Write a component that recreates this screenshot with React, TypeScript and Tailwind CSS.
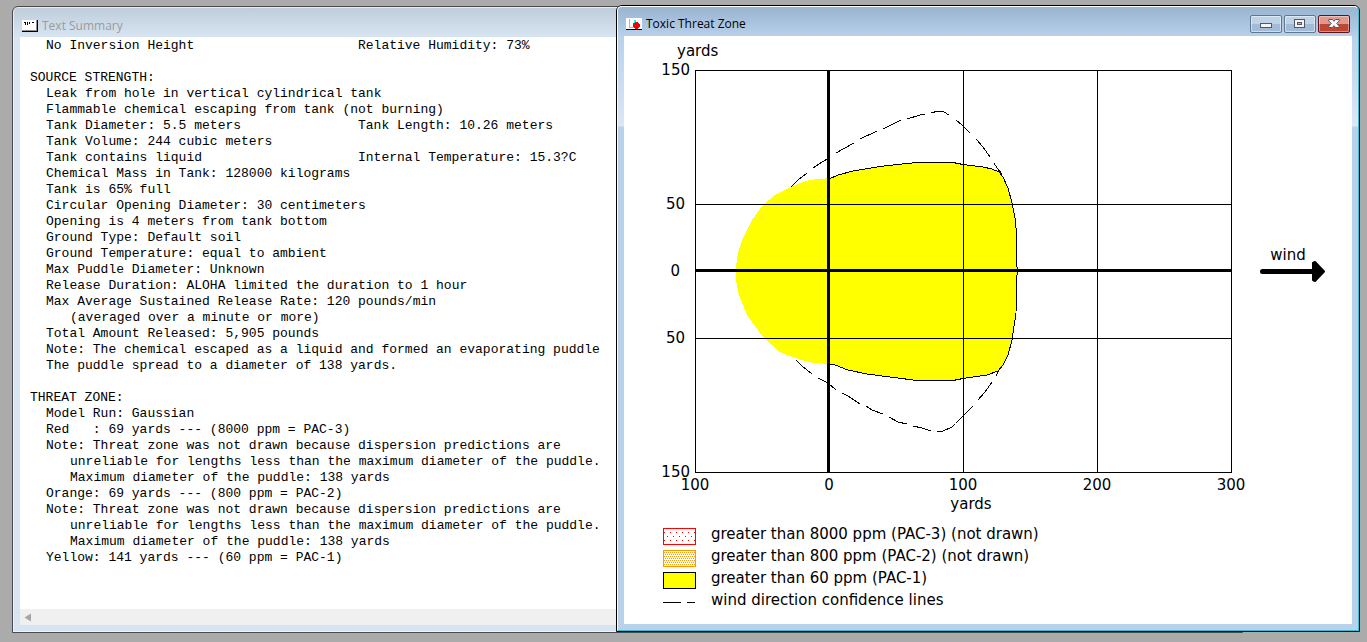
import { clsx } from 'clsx';

interface SummaryLine {
  text: string;
  // Second column, for lines that pair two readings.
  extra?: string;
  indent?: 1 | 2;
}

const INVERSION: SummaryLine[] = [
  { text: 'No Inversion Height', extra: 'Relative Humidity: 73%', indent: 1 },
];

const SOURCE_STRENGTH: SummaryLine[] = [
  { text: 'SOURCE STRENGTH:' },
  { text: 'Leak from hole in vertical cylindrical tank', indent: 1 },
  { text: 'Flammable chemical escaping from tank (not burning)', indent: 1 },
  { text: 'Tank Diameter: 5.5 meters', extra: 'Tank Length: 10.26 meters', indent: 1 },
  { text: 'Tank Volume: 244 cubic meters', indent: 1 },
  { text: 'Tank contains liquid', extra: 'Internal Temperature: 15.3?C', indent: 1 },
  { text: 'Chemical Mass in Tank: 128000 kilograms', indent: 1 },
  { text: 'Tank is 65% full', indent: 1 },
  { text: 'Circular Opening Diameter: 30 centimeters', indent: 1 },
  { text: 'Opening is 4 meters from tank bottom', indent: 1 },
  { text: 'Ground Type: Default soil', indent: 1 },
  { text: 'Ground Temperature: equal to ambient', indent: 1 },
  { text: 'Max Puddle Diameter: Unknown', indent: 1 },
  { text: 'Release Duration: ALOHA limited the duration to 1 hour', indent: 1 },
  { text: 'Max Average Sustained Release Rate: 120 pounds/min', indent: 1 },
  { text: '(averaged over a minute or more)', indent: 2 },
  { text: 'Total Amount Released: 5,905 pounds', indent: 1 },
  { text: 'Note: The chemical escaped as a liquid and formed an evaporating puddle', indent: 1 },
  { text: 'The puddle spread to a diameter of 138 yards.', indent: 1 },
];

const THREAT_ZONE: SummaryLine[] = [
  { text: 'THREAT ZONE:' },
  { text: 'Model Run: Gaussian', indent: 1 },
  { text: 'Red   : 69 yards --- (8000 ppm = PAC-3)', indent: 1 },
  { text: 'Note: Threat zone was not drawn because dispersion predictions are', indent: 1 },
  { text: 'unreliable for lengths less than the maximum diameter of the puddle.', indent: 2 },
  { text: 'Maximum diameter of the puddle: 138 yards', indent: 2 },
  { text: 'Orange: 69 yards --- (800 ppm = PAC-2)', indent: 1 },
  { text: 'Note: Threat zone was not drawn because dispersion predictions are', indent: 1 },
  { text: 'unreliable for lengths less than the maximum diameter of the puddle.', indent: 2 },
  { text: 'Maximum diameter of the puddle: 138 yards', indent: 2 },
  { text: 'Yellow: 141 yards --- (60 ppm = PAC-1)', indent: 1 },
];

// Wind direction confidence lines, one entry per dash.
const CONFIDENCE_DASHES = [
  '167,151 174,144 183,137',
  '189,132 195,128 203,123',
  '212,117 230,107',
  '236,103 253,95',
  '259,93 277,84',
  '283,83 296,79 301,78',
  '307,77 314,75 320,76 325,79',
  '332,84 338,89 346,97',
  '352,103 359,111 366,121',
  '370,127 373,132 378,138',
  '172,324 178,330 188,338',
  '194,342 204,347 212,354',
  '218,357 224,360 236,368',
  '242,370 248,374 259,378',
  '265,381 274,386 283,388',
  '289,390 298,392 307,395',
  '313,396 319,395 328,391 331,388',
  '332,387 341,378 349,370',
  '354,364 361,356 368,346',
  '372,340 376,332',
];

const ZONE_OUTLINE =
  'M206 142.5 L214 139 L229 135 L256 130.5 L273 128.5 L293 126.5 L329 126.5 L339 128.5 L359 131 L368 133 L375 136 L379 141 L384 152 L388 167 L391 182 L392.5 197 L392.5 227 L393.5 235 L392.5 244 L392 277 L388 304 L384 319 L379 329 L374 335 L363 339 L339 342.5 L329 344.5 L293 344.5 L243 338 L224 334 L211 329 L206 328';

const ZONE_BACK =
  'L189 327 L171 322 L156 316 L139 301 L123 279 L115 259 L112 244 L112 231 L114 217 L119 202 L128 184 L139 169 L151 159 L167 151 L176 147 L185 144 L206 142 Z';

function SummaryBlock({ lines }: { lines: SummaryLine[] }) {
  return (
    <div>
      {lines.map((line, i) => (
        <p
          key={i}
          className={clsx(
            'flex whitespace-pre',
            line.indent === 1 && 'pl-4',
            line.indent === 2 && 'pl-10'
          )}>
          <span className={line.extra ? 'w-78 shrink-0' : undefined}>{line.text}</span>
          {line.extra && <span>{line.extra}</span>}
        </p>
      ))}
    </div>
  );
}

function SummaryIcon() {
  return (
    <svg width="16" height="12" shapeRendering="crispEdges" aria-hidden>
      <rect width="15" height="11" fill="#fff" />
      <path d="M15 0h1v12H0v-1h15z" fill="#000" />
      <path d="M14 0h1v10h-1zM0 10h15v1H0z" fill="#909090" />
      <path d="M2 2h2v3H3V3H2zM5 2h1v3H5zM7 2h1v2H7zM10 2h2v1h-2z" fill="#000" />
    </svg>
  );
}

function ThreatIcon() {
  return (
    <svg width="16" height="12" shapeRendering="crispEdges" aria-hidden>
      <rect width="16" height="12" fill="#fff" />
      <path d="M3 1h1v9H3zM3 9h5v1H3zM8 2h2v3H8z" fill="#00ffff" />
      <path d="M7 5h1v4H7zM9 9h1v1H9z" fill="#ff00ff" />
      <path d="M9 4h3v1h1v1h1v3h-1v1h-1v1H9v-1H8V9H7V6h1V5h1z" fill="#ff0000" />
      <path d="M0 11h16v1H0z" fill="#000" />
    </svg>
  );
}

function CaptionButtons() {
  const base =
    'flex h-[18px] w-8 items-center justify-center rounded-xs border ring-inset ring-1';
  const plain = clsx(
    base,
    'border-[#5f7891] ring-white/50 bg-linear-to-b from-[#bfd3e8] from-50% to-[#a2bbd6] to-50%'
  );
  return (
    <div className="flex gap-[2px]">
      <button type="button" aria-label="Minimize" className={plain}>
        <svg width="12" height="12" shapeRendering="crispEdges" aria-hidden>
          <rect x="0.5" y="5.5" width="11" height="4" fill="#f4f4f4" stroke="#535666" />
        </svg>
      </button>
      <button type="button" aria-label="Maximize" className={plain}>
        <svg width="12" height="12" shapeRendering="crispEdges" aria-hidden>
          <rect x="0.5" y="1.5" width="10" height="8" fill="#f4f4f4" stroke="#535666" />
          <rect x="3.5" y="4.5" width="4" height="2" fill="#a2bbd6" stroke="#535666" />
        </svg>
      </button>
      <button
        type="button"
        aria-label="Close"
        className={clsx(
          base,
          'border-[#5b1420] ring-white/40 bg-linear-to-b from-[#e09a8d] from-50% to-[#bf4630] to-50%'
        )}>
        <svg width="12" height="12" viewBox="0 0 12 12" aria-hidden>
          <path
            d="M0.8 1.5H4.5L6 3.3L7.5 1.5H11.2V3L8.7 5.5L11.2 8V9.5H7.5L6 7.7L4.5 9.5H0.8V8L3.3 5.5L0.8 3Z"
            fill="#fafafa"
            stroke="#535666"
          />
        </svg>
      </button>
    </div>
  );
}

function ThreatChart() {
  return (
    <svg
      viewBox="0 0 728 484"
      className="block w-full text-[15px]"
      role="img"
      aria-label="Toxic Threat Zone">
      <g shapeRendering="crispEdges" fill="none" stroke="#000">
        <path d={`${ZONE_OUTLINE} ${ZONE_BACK}`} fill="#ffff00" stroke="none" />
        <path d={ZONE_OUTLINE} />
        {CONFIDENCE_DASHES.map(points => (
          <polyline key={points} points={points} />
        ))}
        <rect x="71.5" y="34.5" width="536" height="402" />
        <path d="M339.5 34V436M473.5 34V436M71 168.5H607M71 302.5H607" />
        <path d="M204.5 34V436M71 234.5H607" strokeWidth="3" />
      </g>
      <path d="M638.5 235.5H690" stroke="#000" strokeWidth="5" strokeLinecap="round" />
      <path
        d="M689 227L691 226L700 235.5L691 245L689 244Z"
        stroke="#000"
        strokeWidth="2"
        strokeLinejoin="round"
      />
      <text x="53" y="20">yards</text>
      <g textAnchor="end">
        <text x="66" y="39">150</text>
        <text x="61" y="173">50</text>
        <text x="56" y="240">0</text>
        <text x="61" y="307">50</text>
        <text x="66" y="441">150</text>
      </g>
      <g textAnchor="middle">
        <text x="71" y="454">100</text>
        <text x="205" y="454">0</text>
        <text x="339" y="454">100</text>
        <text x="473" y="454">200</text>
        <text x="607" y="454">300</text>
        <text x="347" y="473">yards</text>
        <text x="664" y="224">wind</text>
      </g>
    </svg>
  );
}

function ChartLegend() {
  return (
    <ul className="mt-[3px] ml-[39px] text-[15px] leading-[22px]">
      <li className="flex items-end gap-[15px]">
        <svg width="33" height="17" shapeRendering="crispEdges" aria-hidden>
          <defs>
            <pattern id="sparse" width="6" height="8" patternUnits="userSpaceOnUse">
              <path d="M1 4h1v1H1zM4 0h1v1H4z" fill="#ff0000" />
            </pattern>
          </defs>
          <rect x="0.5" y="0.5" width="32" height="16" fill="url(#sparse)" stroke="#ff0000" />
        </svg>
        greater than 8000 ppm (PAC-3) (not drawn)
      </li>
      <li className="flex items-end gap-[15px]">
        <svg width="33" height="17" shapeRendering="crispEdges" aria-hidden>
          <defs>
            <pattern id="dense" width="2" height="4" patternUnits="userSpaceOnUse">
              <path d="M0 0h1v1H0zM1 2h1v1H1z" fill="#ff9900" />
            </pattern>
          </defs>
          <rect x="0.5" y="0.5" width="32" height="16" fill="url(#dense)" stroke="#ff9900" />
        </svg>
        greater than 800 ppm (PAC-2) (not drawn)
      </li>
      <li className="flex items-end gap-[15px]">
        <svg width="33" height="17" shapeRendering="crispEdges" aria-hidden>
          <rect x="0.5" y="0.5" width="32" height="16" fill="#ffff00" stroke="#000" />
        </svg>
        greater than 60 ppm (PAC-1)
      </li>
      <li className="flex items-end gap-[15px]">
        <svg width="33" height="17" shapeRendering="crispEdges" aria-hidden>
          <path d="M0 8.5h18M24 8.5h8" stroke="#000" />
        </svg>
        wind direction confidence lines
      </li>
    </ul>
  );
}

function TextSummaryWindow() {
  return (
    <section className="absolute top-[6px] right-[124px] bottom-[9px] left-3 flex flex-col rounded-t-md border border-[#4a4a4a] bg-linear-to-b from-[#bfcddb] to-[#d7e4f2] to-[30px] p-[7px] pt-0 ring-1 ring-white/60 ring-inset">
      <header className="flex h-[30px] items-center gap-1 pt-2 pl-[2px] font-['Open_Sans',sans-serif] text-xs text-[#9b9b9b]">
        <SummaryIcon />
        <h2>Text Summary</h2>
      </header>
      <div className="flex flex-1 flex-col justify-between overflow-hidden bg-white">
        <div className="space-y-4 pt-px pl-[10px] font-['Liberation_Mono',monospace] text-[13px] leading-4 text-black">
          <SummaryBlock lines={INVERSION} />
          <SummaryBlock lines={SOURCE_STRENGTH} />
          <SummaryBlock lines={THREAT_ZONE} />
        </div>
        <div className="flex h-4 items-center bg-[#f0f0f0] pl-1">
          <button type="button" aria-label="Scroll left">
            <svg width="8" height="9" aria-hidden>
              <path d="M0.5 4.5L7 0.5V8.5Z" fill="#a6a6a6" />
            </svg>
          </button>
        </div>
      </div>
    </section>
  );
}

function ThreatZoneWindow() {
  return (
    <section className="absolute top-[5px] right-[7px] bottom-[10px] left-[616px] flex flex-col rounded-t-md border border-black bg-[#bbd1ea]">
      <div className="flex flex-1 flex-col rounded-t-[5px] border border-t-white border-r-[#22c8e0] border-b-[#22c8e0] border-l-white bg-[linear-gradient(#99b4d1,#b9d1ea_30px,#dbe7f5_119px,#b9d1ea_120px)] px-[6px] pb-[6px]">
        <header className="flex h-[29px] items-center justify-between pt-[5px] pr-[2px] pl-[2px]">
          <div className="flex items-center gap-1 font-['Open_Sans',sans-serif] text-xs text-black">
            <ThreatIcon />
            <h2>Toxic Threat Zone</h2>
          </div>
          <CaptionButtons />
        </header>
        <div className="flex-1 overflow-hidden bg-white font-['DejaVu_Sans',sans-serif] text-black">
          <ThreatChart />
          <ChartLegend />
        </div>
      </div>
    </section>
  );
}

export default function App() {
  return (
    <main className="relative h-screen overflow-hidden bg-[#ababab]">
      <TextSummaryWindow />
      <ThreatZoneWindow />
    </main>
  );
}
